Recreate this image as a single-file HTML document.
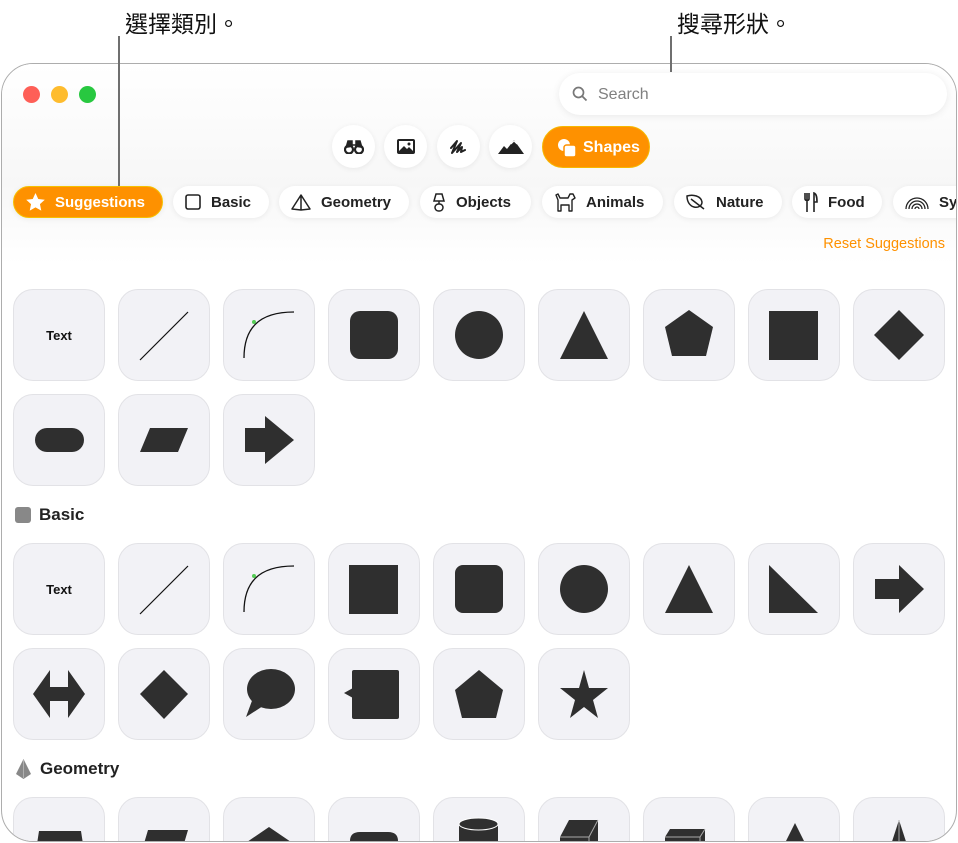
<!DOCTYPE html>
<html><head><meta charset="utf-8"><style>
*{margin:0;padding:0;box-sizing:border-box}
body{width:958px;height:843px;background:#fff;position:relative;overflow:hidden;font-family:"Liberation Sans",Arial,sans-serif}
.lbl{position:absolute;font-family:"Liberation Sans","Noto Sans CJK TC",sans-serif;font-size:23px;color:#111;top:5px}
.vl{position:absolute;width:2px;background:#6f6f6f;z-index:5}
.win{position:absolute;left:1px;top:63px;width:956px;height:779px;border:1px solid #adadad;border-radius:32px;overflow:hidden;background:#fff}
.in{position:absolute;left:-2px;top:-64px;width:958px;height:843px}
.hdr{position:absolute;left:0;top:64px;width:958px;height:200px;background:linear-gradient(#fff,#f7f7f7 60%,#fff)}
.dot{position:absolute;top:86px;width:17px;height:17px;border-radius:50%}
.search{position:absolute;left:559px;top:73px;width:388px;height:42px;border-radius:21px;background:#fff;box-shadow:0 1px 8px rgba(0,0,0,.08)}
.search span{position:absolute;left:39px;top:13px;font-size:16px;color:#808080}
.circ{position:absolute;top:125px;width:43px;height:43px;border-radius:50%;background:#fff;box-shadow:0 1px 6px rgba(0,0,0,.07);display:flex;align-items:center;justify-content:center}
.shp{position:absolute;left:542px;top:126px;width:108px;height:42px;border-radius:21px;background:#fe9100;border:1px solid #f6b800;color:#fff;font-weight:bold;font-size:16px}
.pill{position:absolute;top:186px;height:32px;border-radius:16px;background:#fff;box-shadow:0 1px 6px rgba(0,0,0,.07);font-weight:bold;font-size:15px;color:#222;display:flex;align-items:center;padding-left:12px;white-space:nowrap;overflow:hidden}
.pill svg{margin-right:10px;flex:none}
.pill.on{background:#fe9100;color:#fff;border:1px solid #f6c000}
.tile{position:absolute;width:92px;height:92px;border-radius:20px;background:#f2f2f6;border:1px solid #e2e2e6}
.tile svg{position:absolute;left:-1px;top:-1px}
.sec{position:absolute;left:15px;font-size:17px;font-weight:bold;color:#222;display:flex;align-items:center}
</style></head><body>
<div class="lbl" style="left:125px">選擇類別。</div>
<div class="lbl" style="left:677px">搜尋形狀。</div>
<div class="vl" style="left:118px;top:36px;height:150px"></div>
<div class="vl" style="left:670px;top:36px;height:36px"></div>
<div class="win"><div class="in">
<div class="hdr"></div>
<div class="dot" style="left:23px;background:#fe5f57"></div>
<div class="dot" style="left:51px;background:#febc2e"></div>
<div class="dot" style="left:79px;background:#28c840"></div>
<div class="search"><svg style="position:absolute;left:13px;top:13px" width="16" height="16" viewBox="0 0 16 16"><circle cx="6.5" cy="6.5" r="5" fill="none" stroke="#777" stroke-width="1.7"/><path d="M10 10l4.5 4.5" stroke="#777" stroke-width="1.8"/></svg><span>Search</span></div>
<div class="circ" style="left:332px"><svg width="20" height="14" viewBox="0 0 20 14"><circle cx="5" cy="9.5" r="4" fill="none" stroke="#222" stroke-width="2.2"/><circle cx="15" cy="9.5" r="4" fill="none" stroke="#222" stroke-width="2.2"/><path d="M2 8L4 1h4v6M18 8L16 1h-4v6M8 5h4" fill="#222" stroke="#222" stroke-width="1.5"/></svg></div>
<div class="circ" style="left:384px"><svg width="18" height="15" viewBox="0 0 18 15"><rect x="0" y="0" width="18" height="15" rx="2" fill="#222"/><rect x="2" y="2" width="14" height="10" fill="#fff"/><path d="M2 12l5-5 3 3 2-2 4 4z" fill="#222"/><circle cx="12" cy="5" r="1.5" fill="#222"/></svg></div>
<div class="circ" style="left:437px"><svg width="18" height="16" viewBox="0 0 18 16"><path d="M1 9l6-7-5 12 9-10-4 9 5-5-1 5 4-2" fill="none" stroke="#222" stroke-width="2" stroke-linecap="round" stroke-linejoin="round"/></svg></div>
<div class="circ" style="left:489px"><svg width="26" height="14" viewBox="0 0 26 14"><path d="M0 14l6-8 3 3 7-9 10 14z" fill="#222"/><path d="M13 4l3-3 3 3" fill="none" stroke="#fff" stroke-width="1"/></svg></div>
<div class="shp"><svg style="position:absolute;left:14px;top:11px" width="20" height="20" viewBox="0 0 20 20"><circle cx="7" cy="7" r="6" fill="#fff"/><rect x="7" y="7" width="12" height="12" rx="2.5" fill="#fff" stroke="#fe9100" stroke-width="1.5"/></svg><span style="position:absolute;left:40px;top:12px">Shapes</span></div>

<div class="pill on" style="left:13px;width:150px"><svg width="19" height="18" viewBox="0 0 20 19"><path d="M10 0l2.9 6.3 6.9.8-5.1 4.7 1.4 6.8L10 15.2 3.9 18.6l1.4-6.8L.2 7.1l6.9-.8z" fill="#fff"/></svg>Suggestions</div>
<div class="pill" style="left:173px;width:96px"><svg width="16" height="16" viewBox="0 0 16 16"><rect x="1" y="1" width="14" height="14" rx="2" fill="none" stroke="#222" stroke-width="1.6"/></svg>Basic</div>
<div class="pill" style="left:279px;width:130px"><svg width="20" height="17" viewBox="0 0 20 17"><path d="M10 1L1 15l9 1 9-1zM10 1v15" fill="none" stroke="#222" stroke-width="1.5" stroke-linejoin="round"/></svg>Geometry</div>
<div class="pill" style="left:420px;width:111px"><svg width="14" height="19" viewBox="0 0 14 19"><path d="M4 1h6l2 7H2zM7 8v3" fill="none" stroke="#222" stroke-width="1.5"/><rect x="3" y="11" width="8" height="7" rx="3.5" fill="none" stroke="#222" stroke-width="1.5"/></svg>Objects</div>
<div class="pill" style="left:542px;width:121px"><svg width="22" height="19" viewBox="0 0 22 19"><path d="M2 2l2 5v11h3v-6h8v6h3V7l3-2-2-4h-3l-2 4H6L4 1z" fill="none" stroke="#222" stroke-width="1.4" stroke-linejoin="round"/></svg>Animals</div>
<div class="pill" style="left:674px;width:108px"><svg width="20" height="16" viewBox="0 0 20 16"><path d="M1 2c6-2 14 0 15 6 0 4-4 6-8 5S1 8 1 2zM5 5l13 10" fill="none" stroke="#222" stroke-width="1.5"/></svg>Nature</div>
<div class="pill" style="left:792px;width:90px"><svg width="14" height="20" viewBox="0 0 14 20"><path d="M1 1v6c0 2 4 2 4 0V1M3 1v19M10 20V1c3 1 3 6 3 9h-3" fill="none" stroke="#222" stroke-width="1.6"/></svg>Food</div>
<div class="pill" style="left:893px;width:80px"><svg width="24" height="14" viewBox="0 0 24 14"><path d="M1 14a11 11 0 0122 0M4 14a8 8 0 0116 0M7 14a5 5 0 0110 0M10 14a2 2 0 014 0" fill="none" stroke="#222" stroke-width="1.3"/></svg>Symbols</div>

<div style="position:absolute;right:13px;top:236px;font-size:14.5px;color:#fe9100">Reset Suggestions</div>

<div class="tile" style="left:13px;top:289px"><div style="position:absolute;width:100%;top:38px;text-align:center;font-size:13px;font-weight:bold;color:#111">Text</div></div>
<div class="tile" style="left:118px;top:289px"><svg width="92" height="92"><path d="M22 71L70 23" stroke="#111" stroke-width="1.2"/></svg></div>
<div class="tile" style="left:223px;top:289px"><svg width="92" height="92"><path d="M21 69C21 40 35 23 71 23" fill="none" stroke="#111" stroke-width="1.3"/><circle cx="31" cy="33" r="2" fill="#5c5"/></svg></div>
<div class="tile" style="left:328px;top:289px"><svg width="92" height="92"><rect x="22" y="22" width="48" height="48" rx="10" fill="#2f2f2f"/></svg></div>
<div class="tile" style="left:433px;top:289px"><svg width="92" height="92"><circle cx="46" cy="46" r="24" fill="#2f2f2f"/></svg></div>
<div class="tile" style="left:538px;top:289px"><svg width="92" height="92"><path d="M46 22L70 70H22z" fill="#2f2f2f"/></svg></div>
<div class="tile" style="left:643px;top:289px"><svg width="92" height="92"><path d="M46 21L70 38 63 67H29L22 38z" fill="#2f2f2f"/></svg></div>
<div class="tile" style="left:748px;top:289px"><svg width="92" height="92"><rect x="21" y="22" width="49" height="49" fill="#2f2f2f"/></svg></div>
<div class="tile" style="left:853px;top:289px"><svg width="92" height="92"><path d="M46 21L71 46 46 71 21 46z" fill="#2f2f2f"/></svg></div>
<div class="tile" style="left:13px;top:394px"><svg width="92" height="92"><rect x="22" y="34" width="49" height="24" rx="12" fill="#2f2f2f"/></svg></div>
<div class="tile" style="left:118px;top:394px"><svg width="92" height="92"><path d="M22 58L32 34H70L60 58z" fill="#2f2f2f"/></svg></div>
<div class="tile" style="left:223px;top:394px"><svg width="92" height="92"><path d="M22 34H42V22L71 46 42 70V58H22z" fill="#2f2f2f"/></svg></div>

<div class="sec" style="top:505px"><span style="display:inline-block;width:16px;height:16px;border-radius:3px;background:#888;margin-right:8px"></span>Basic</div>
<div class="tile" style="left:13px;top:543px"><div style="position:absolute;width:100%;top:38px;text-align:center;font-size:13px;font-weight:bold;color:#111">Text</div></div>
<div class="tile" style="left:118px;top:543px"><svg width="92" height="92"><path d="M22 71L70 23" stroke="#111" stroke-width="1.2"/></svg></div>
<div class="tile" style="left:223px;top:543px"><svg width="92" height="92"><path d="M21 69C21 40 35 23 71 23" fill="none" stroke="#111" stroke-width="1.3"/><circle cx="31" cy="33" r="2" fill="#5c5"/></svg></div>
<div class="tile" style="left:328px;top:543px"><svg width="92" height="92"><rect x="21" y="22" width="49" height="49" fill="#2f2f2f"/></svg></div>
<div class="tile" style="left:433px;top:543px"><svg width="92" height="92"><rect x="22" y="22" width="48" height="48" rx="8" fill="#2f2f2f"/></svg></div>
<div class="tile" style="left:538px;top:543px"><svg width="92" height="92"><circle cx="46" cy="46" r="24" fill="#2f2f2f"/></svg></div>
<div class="tile" style="left:643px;top:543px"><svg width="92" height="92"><path d="M46 22L70 70H22z" fill="#2f2f2f"/></svg></div>
<div class="tile" style="left:748px;top:543px"><svg width="92" height="92"><path d="M21 22L70 70H21z" fill="#2f2f2f"/></svg></div>
<div class="tile" style="left:853px;top:543px"><svg width="92" height="92"><path d="M22 36H46V22L71 46 46 70V56H22z" fill="#2f2f2f"/></svg></div>
<div class="tile" style="left:13px;top:648px"><svg width="92" height="92"><path d="M20 46L37 22V39H55V22L72 46 55 70V53H37V70z" fill="#2f2f2f"/></svg></div>
<div class="tile" style="left:118px;top:648px"><svg width="92" height="92"><path d="M46 22L70 46 46 71 22 46z" fill="#2f2f2f"/></svg></div>
<div class="tile" style="left:223px;top:648px"><svg width="92" height="92"><ellipse cx="48" cy="41" rx="24" ry="20" fill="#2f2f2f"/><path d="M30 50L23 69 40 58z" fill="#2f2f2f"/></svg></div>
<div class="tile" style="left:328px;top:648px"><svg width="92" height="92"><rect x="24" y="22" width="47" height="49" rx="2" fill="#2f2f2f"/><path d="M25 40L16 45 25 50z" fill="#2f2f2f"/></svg></div>
<div class="tile" style="left:433px;top:648px"><svg width="92" height="92"><path d="M46 22L70 42 63 70H29L22 42z" fill="#2f2f2f"/></svg></div>
<div class="tile" style="left:538px;top:648px"><svg width="92" height="92"><path d="M46 22L51 40H70L55 52 60 70 46 59 32 70 37 52 22 40H41z" fill="#2f2f2f"/></svg></div>

<div class="sec" style="top:759px"><svg width="17" height="20" viewBox="0 0 17 20" style="margin-right:8px"><path d="M8.5 0L1 15l7.5 5 7.5-5z" fill="#888"/><path d="M8.5 1v18" stroke="#bbb" stroke-width=".8"/></svg>Geometry</div>
<div class="tile" style="left:13px;top:797px"><svg width="92" height="92"><path d="M26 34H68L72 60H22z" fill="#2f2f2f"/></svg></div>
<div class="tile" style="left:118px;top:797px"><svg width="92" height="92"><path d="M30 33H70L62 60H22z" fill="#2f2f2f"/></svg></div>
<div class="tile" style="left:223px;top:797px"><svg width="92" height="92"><path d="M46 30L68 45V70H24V45z" fill="#2f2f2f"/></svg></div>
<div class="tile" style="left:328px;top:797px"><svg width="92" height="92"><path d="M22 60V44Q22 35 32 35H60Q70 35 70 44V60z" fill="#2f2f2f"/></svg></div>
<div class="tile" style="left:433px;top:797px"><svg width="92" height="92"><rect x="26" y="27" width="39" height="50" fill="#2f2f2f"/><ellipse cx="45.5" cy="27" rx="19.5" ry="6" fill="#2f2f2f" stroke="#fff" stroke-width="1"/></svg></div>
<div class="tile" style="left:538px;top:797px"><svg width="92" height="92"><path d="M22 40L31 23H60V53L51 70H22z" fill="#2f2f2f"/><path d="M22 40H51L60 23M51 40V70" fill="none" stroke="#aaa" stroke-width="1"/></svg></div>
<div class="tile" style="left:643px;top:797px"><svg width="92" height="92"><path d="M22 40L27 32H62V50L57 60H22z" fill="#2f2f2f"/><path d="M22 40H57L62 32M57 40V60" fill="none" stroke="#aaa" stroke-width="1"/></svg></div>
<div class="tile" style="left:748px;top:797px"><svg width="92" height="92"><path d="M47 26L62 56H32z" fill="#2f2f2f"/></svg></div>
<div class="tile" style="left:853px;top:797px"><svg width="92" height="92"><path d="M46 23L58 60H34z" fill="#2f2f2f"/><path d="M46 23V60" stroke="#aaa" stroke-width="1"/></svg></div>
</div></div>
</body></html>
